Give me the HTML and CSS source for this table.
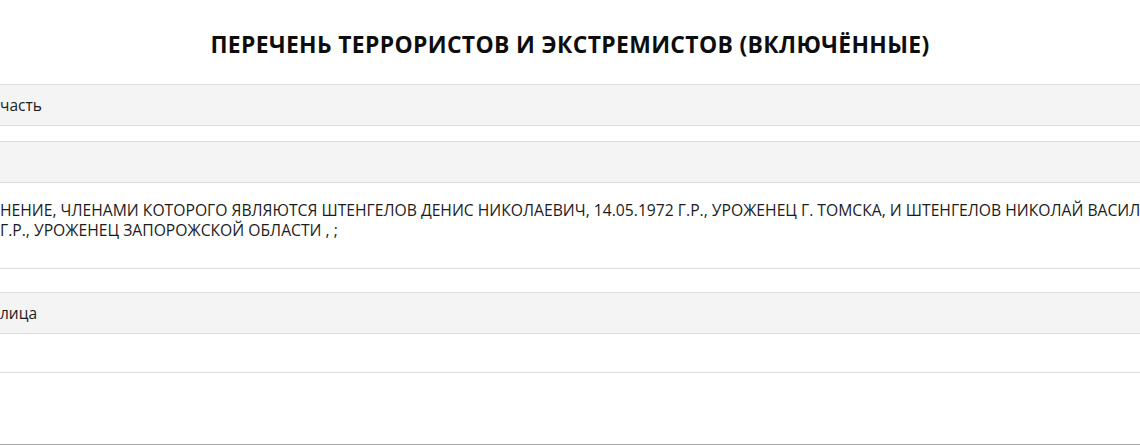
FILE: index.html
```html
<!DOCTYPE html>
<html lang="ru">
<head>
<meta charset="utf-8">
<title>Перечень</title>
<link rel="stylesheet" href="styles.css">
</head>
<body>
<div class="page">
  <h1 class="title">ПЕРЕЧЕНЬ ТЕРРОРИСТОВ И ЭКСТРЕМИСТОВ (ВКЛЮЧЁННЫЕ)</h1>
  <section class="block">
    <div class="head">часть</div>
    <div class="body body-short"></div>
  </section>
  <section class="block">
    <div class="head"></div>
    <div class="body body-text">
      <div class="line">НЕНИЕ, ЧЛЕНАМИ КОТОРОГО ЯВЛЯЮТСЯ ШТЕНГЕЛОВ ДЕНИС НИКОЛАЕВИЧ, 14.05.1972 Г.Р., УРОЖЕНЕЦ Г. ТОМСКА, И ШТЕНГЕЛОВ НИКОЛАЙ ВАСИЛЬ</div>
      <div class="line">Г.Р., УРОЖЕНЕЦ ЗАПОРОЖСКОЙ ОБЛАСТИ , ;</div>
    </div>
  </section>
  <section class="block block-spaced">
    <div class="head">лица</div>
    <div class="body body-empty"></div>
  </section>
  <div class="footer"></div>
</div>
</body>
</html>
```
FILE: styles.css
```css
html, body {
  margin: 0;
  padding: 0;
  background: #ffffff;
}
body {
  width: 1140px;
  height: 445px;
  overflow: hidden;
  font-family: "Open Sans", "Liberation Sans", sans-serif;
  color: #1c1c1c;
}
.page {
  display: flex;
  flex-direction: column;
  height: 445px;
}
.title {
  margin: 0;
  height: 84px;
  padding-top: 4px;
  box-sizing: border-box;
  display: flex;
  align-items: center;
  justify-content: center;
  font-size: 22.9px;
  font-weight: 700;
  color: #0d0d0d;
  letter-spacing: 0.35px;
}
.block {
  display: flex;
  flex-direction: column;
}
.head {
  height: 40px;
  line-height: 40px;
  background: #f4f4f4;
  border-top: 1px solid #dcdcdc;
  border-bottom: 1px solid #dcdcdc;
  font-size: 15.5px;
  white-space: nowrap;
}
.body-short {
  height: 15px;
}
.body-text {
  padding: 17px 0 28px;
  border-bottom: 1px solid #dcdcdc;
  font-size: 15.7px;
  line-height: 20px;
}
.line {
  white-space: nowrap;
}
.block-spaced {
  margin-top: 23px;
}
.body-empty {
  height: 38px;
  border-bottom: 1px solid #dcdcdc;
}
.footer {
  margin-top: auto;
  border-bottom: 1px solid #a9a9a9;
}
```
